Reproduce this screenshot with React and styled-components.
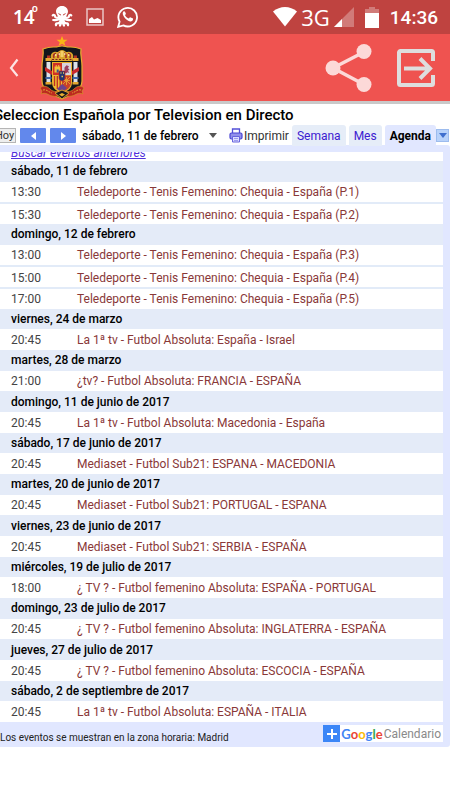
import { Fragment } from "react";
import styled, { createGlobalStyle } from "styled-components";

const days = [
  {
    date: "sábado, 11 de febrero",
    events: [
      ["13:30", "Teledeporte - Tenis Femenino: Chequia - España (P.1)"],
      ["15:30", "Teledeporte - Tenis Femenino: Chequia - España (P.2)"],
    ],
  },
  {
    date: "domingo, 12 de febrero",
    events: [
      ["13:00", "Teledeporte - Tenis Femenino: Chequia - España (P.3)"],
      ["15:00", "Teledeporte - Tenis Femenino: Chequia - España (P.4)"],
      ["17:00", "Teledeporte - Tenis Femenino: Chequia - España (P.5)"],
    ],
  },
  {
    date: "viernes, 24 de marzo",
    events: [["20:45", "La 1ª tv - Futbol Absoluta: España - Israel"]],
  },
  {
    date: "martes, 28 de marzo",
    events: [["21:00", "¿tv? - Futbol Absoluta: FRANCIA - ESPAÑA"]],
  },
  {
    date: "domingo, 11 de junio de 2017",
    events: [["20:45", "La 1ª tv - Futbol Absoluta: Macedonia - España"]],
  },
  {
    date: "sábado, 17 de junio de 2017",
    events: [["20:45", "Mediaset - Futbol Sub21: ESPANA - MACEDONIA"]],
  },
  {
    date: "martes, 20 de junio de 2017",
    events: [["20:45", "Mediaset - Futbol Sub21: PORTUGAL - ESPANA"]],
  },
  {
    date: "viernes, 23 de junio de 2017",
    events: [["20:45", "Mediaset - Futbol Sub21: SERBIA - ESPAÑA"]],
  },
  {
    date: "miércoles, 19 de julio de 2017",
    events: [["18:00", "¿ TV ? - Futbol femenino Absoluta: ESPAÑA - PORTUGAL"]],
  },
  {
    date: "domingo, 23 de julio de 2017",
    events: [["20:45", "¿ TV ? - Futbol femenino Absoluta: INGLATERRA - ESPAÑA"]],
  },
  {
    date: "jueves, 27 de julio de 2017",
    events: [["20:45", "¿ TV ? - Futbol femenino Absoluta: ESCOCIA - ESPAÑA"]],
  },
  {
    date: "sábado, 2 de septiembre de 2017",
    events: [["20:45", "La 1ª tv - Futbol Absoluta: ESPAÑA - ITALIA"]],
  },
];

function OctopusIcon() {
  return (
    <svg width="22" height="22" viewBox="0 0 22 22" fill="none" stroke="#fff" strokeWidth="2.200" strokeLinecap="round">
      <path d="M11 0C7.200 0 5 2.500 5 5.500c0 2 1.300 3.200 1.800 5L9 14h4l2.200-3.500c.5-1.800 1.800-3 1.800-5C17 2.500 14.800 0 11 0z" fill="#fff" stroke="none" />
      <path d="M8.500 10.500C7 12.500 4 12 4 10.200c0-1.200-1.500-1.700-2.300-.8M13.500 10.500c1.500 2 4.500 1.500 4.500-.3 0-1.200 1.500-1.700 2.300-.8" />
      <path d="M8.500 12.500c-1 2-4 1.500-6.300 1.500M13.500 12.500c1 2 4 1.500 6.300 1.500M9.500 13.500c0 3-1.500 4-3.500 3.800-1 0-1.300 1-1 2M12.500 13.500c0 3 1.500 4 3.500 3.800 1 0 1.300 1 1 2M10.500 14c0 3-.7 4-1.500 5.500M11.500 14c0 3 .7 4 1.500 5.500" />
      <path d="M7.800 7.800l1.900 1.100M14.200 7.800l-1.900 1.100" stroke="#bf4340" strokeWidth="1" />
    </svg>
  );
}

function PictureIcon() {
  return (
    <svg width="18" height="18" viewBox="0 0 18 18">
      <rect x="1" y="1" width="16" height="16" fill="none" stroke="#eac5c4" strokeWidth="1.500" />
      <path d="M3 15v-4l3-2 2 2.500 3.500-1.500 3.500 2v3z" fill="#fff" />
    </svg>
  );
}

function WhatsappIcon() {
  return (
    <svg width="22" height="22" viewBox="0 0 22 22">
      <path d="M1.200 20.800l1.400-5.100A9.300 9.300 0 1 1 6.400 19.400z" fill="none" stroke="#fff" strokeWidth="1.800" />
      <path d="M8 5.800c-.4-.7-1-.7-1.500-.2-1.300 1.300-.9 3.300.6 5.400 1.800 2.600 4.100 4.200 6.200 4.400 1.500.1 2.800-.9 2.800-2.400 0-.4-.2-.6-.5-.7l-2-.9c-.4-.2-.7-.1-.9.200l-.8 1c-1.700-.5-3.200-1.900-3.900-3.400l.8-1.100c.1-.2.1-.4 0-.7z" fill="#fff" />
    </svg>
  );
}

function WifiIcon() {
  return (
    <svg width="24" height="20" viewBox="0 0 24 20">
      <path d="M0 4.500C7-1.500 17-1.500 24 4.500L12 19.500z" fill="#fff" />
    </svg>
  );
}

function SignalIcon() {
  return (
    <svg width="20" height="20" viewBox="0 0 20 20">
      <path d="M0 20L20 0v20z" fill="#d17b79" />
      <path d="M0 20l8-8v8z" fill="#fff" />
    </svg>
  );
}

function BatteryIcon() {
  return (
    <svg width="14" height="21" viewBox="0 0 14 21">
      <path d="M4 0h6v2h4v5H0V2h4z" fill="#d17b79" />
      <path d="M0 6h14v15H0z" fill="#fff" />
    </svg>
  );
}

function BackIcon() {
  return (
    <svg width="10" height="20" viewBox="0 0 10 20">
      <path d="M8.500 1.500L2 10l6.500 8" fill="none" stroke="#fde4e4" strokeWidth="2.200" />
    </svg>
  );
}

function Crest() {
  return (
    <svg width="44" height="64" viewBox="0 0 44 64">
      <path d="M22 0l1.500 3.700 4 .1-3.200 2.400 1.200 3.800-3.500-2.300L18.500 10l1.200-3.800-3.200-2.400 4-.1z" fill="#f9b516" />
      <path d="M22 10c3 0 4 1 7 1s6-.4 12 2c-1 6 1 10 1 17v15c0 9-10 14-20 18C12 59 2 54 2 45V30c0-7 2-11 1-17 6-2.400 9-2 12-2s4-1 7-1z" fill="#12151c" stroke="#e6ae31" strokeWidth="1.200" />
      <path d="M12 25c-2-3-2-8 2-9 2-.8 3 .2 4 0 1-1 2-2 4-2s3 1 4 2c1 .2 2-.8 4 0 4 1 4 6 2 9z" fill="#d9a52c" />
      <path d="M14 22c-1-3 0-4.500 2-4.500M18 22c-.4-3 .6-5 2-5M30 22c1-3 0-4.500-2-4.500M26 22c.4-3-.6-5-2-5" stroke="#a32d24" strokeWidth="1.600" fill="none" />
      <path d="M20.500 15h3v6h-3z" fill="#f4cf69" />
      <path d="M15 19h1.500M18.500 18H20M24 18h1.500M28 19h1.500" stroke="#fff1b5" strokeWidth="1.300" />
      <path d="M12 23.500h20" stroke="#7a1f20" strokeWidth="1" strokeDasharray="2 1.500" />
      <path d="M12 26h20v20c0 7-5 9-10 11-5-2-10-4-10-11z" fill="#e9b32e" />
      <path d="M13 27h9v12h-9z" fill="#cf3026" />
      <path d="M14.500 36.500v-6h1.200v-1.500h1v1.500h1.500v-1.500h1v1.500h1.200v6z" fill="#f2c33c" />
      <path d="M16.700 33.500h2v3h-2z" fill="#385193" />
      <path d="M22 27h9v12h-9z" fill="#d7d4dc" />
      <path d="M24.500 37c1-2-.5-3 0-5.500l2-2.300 2.500 1-1.200 2 1.700 1-1.500 1.500 1.300 2.300-2-.7-1 1z" fill="#9b405f" />
      <path d="M13 39.500h9V56c-6-2-9-5-9-10z" fill="#edbd33" />
      <path d="M14.500 40v10M17.300 40v13M20.200 40v15" stroke="#bf2d24" strokeWidth="1.300" />
      <path d="M22 39.500h9V46c0 6-4 8-9 10z" fill="#c94028" />
      <path d="M23 41l7 7M30 41l-7 7M23 44.500h7M26.500 41v8" stroke="#e3a034" strokeWidth=".9" />
      <path d="M17 53l5-5 5 4-5 4.500z" fill="#6b438d" />
      <path d="M19 35h6v7c0 2-2 3-3 3s-3-1-3-3z" fill="#233471" stroke="#be2926" strokeWidth=".7" />
      <path d="M20.500 37h1M23 37h1M21.500 40.500h1.500" stroke="#e7c857" strokeWidth="1.300" />
      <path d="M6.500 26h4v22h-4zM33.500 26h4v22h-4z" fill="#dce2e9" />
      <path d="M5.500 22h6v3h-6zM32.500 22h6v3h-6zM5.500 46h6v2.500h-6zM32.500 46h6v2.500h-6z" fill="#e3a72f" />
      <path d="M7 19.500h3V22H7zM34 19.500h3V22h-3z" fill="#b23224" />
      <path d="M5 31l7 4v4l-7-4zM39 31l-7 4v4l7-4z" fill="#c8292d" />
      <path d="M5.500 42h6M32.500 42h6" stroke="#4068aa" strokeWidth="2" />
      <path d="M0 52c3-3 7-2 10 1 4 4 8 2 12 2s8 2 12-2c3-3 7-4 10-1l-2 3 1 3c-5-2-7 1-11 2-4 1.500-7-1-10-1s-6 2.500-10 1c-4-1-6-4-11-2l1-3z" fill="#bc2a20" stroke="#d59228" strokeWidth=".7" />
      <path d="M3 54c4-1 5 2 9 3M41 54c-4-1-5 2-9 3" fill="none" stroke="#e4a634" strokeWidth="1" strokeDasharray="2 1" />
      <path d="M15 57l7-3 7 3-7 6z" fill="#171920" stroke="#d99e2c" />
      <path d="M19 58.500l3-1.500 3 1.500-3 2z" fill="#e7ae32" />
    </svg>
  );
}

function ShareIcon() {
  return (
    <svg width="47" height="50" viewBox="0 0 47 50">
      <path d="M39 9L8 25l31 16.500" fill="none" stroke="#fcd9d8" strokeWidth="3.500" />
      <circle cx="39" cy="8.500" r="7.500" fill="#fcd9d8" />
      <circle cx="8" cy="25" r="7.500" fill="#fcd9d8" />
      <circle cx="39" cy="41.500" r="7.500" fill="#fcd9d8" />
    </svg>
  );
}

function ExitIcon() {
  return (
    <svg width="40" height="40" viewBox="0 0 40 40" fill="none" stroke="#dedede" strokeWidth="4">
      <path d="M37 13V4.500a1.500 1.500 0 0 0-1.500-1.500h-31A1.500 1.500 0 0 0 3 4.500v31A1.500 1.500 0 0 0 4.500 37h31a1.500 1.500 0 0 0 1.500-1.500V27" />
      <path d="M8 20.500h26M24 10.500l10 10-10 10" />
    </svg>
  );
}

function PrinterIcon() {
  return (
    <svg width="14" height="15" viewBox="0 0 14 15">
      <path d="M3.500 5V1h7v4" fill="#fff" stroke="#5350d8" strokeWidth="1.300" />
      <rect x="1" y="5" width="12" height="6" rx="1.500" fill="#9190ea" stroke="#4a45d4" strokeWidth="1.200" />
      <path d="M3.500 8.500h7V14h-7z" fill="#dcdcff" stroke="#6764dd" />
      <path d="M5 10.500h4M5 12.500h4" stroke="#8d8bea" strokeWidth=".8" />
    </svg>
  );
}

function Arrow({ d, color, width, height }) {
  return (
    <svg width={width} height={height} viewBox={`0 0 ${width} ${height}`}>
      <path d={d} fill={color} />
    </svg>
  );
}

function App() {
  return (
    <>
      <GlobalStyle />
      <StatusBar>
        <StatusGroup $gap="13px">
          <Temperature>
            14<Degree>o</Degree>
          </Temperature>
          <OctopusIcon />
          <PictureIcon />
          <WhatsappIcon />
        </StatusGroup>
        <StatusGroup $gap="4px">
          <WifiIcon />
          <Network>3G</Network>
          <SignalIcon />
          <Battery>
            <BatteryIcon />
          </Battery>
          <Clock>14:36</Clock>
        </StatusGroup>
      </StatusBar>
      <AppBar>
        <BarButton aria-label="Atrás">
          <BackIcon />
        </BarButton>
        <Crest />
        <BarActions>
          <BarButton aria-label="Compartir">
            <ShareIcon />
          </BarButton>
          <BarButton aria-label="Salir">
            <ExitIcon />
          </BarButton>
        </BarActions>
      </AppBar>
      <Calendar>
        <Title>Seleccion Española por Television en Directo</Title>
        <Toolbar>
          <Today>Hoy</Today>
          <NavButton aria-label="Anterior">
            <Arrow d="M5 0v8L0 4z" color="#fff" width={5} height={8} />
          </NavButton>
          <NavButton aria-label="Siguiente">
            <Arrow d="M0 0v8l5-4z" color="#fff" width={5} height={8} />
          </NavButton>
          <DateButton>
            sábado, 11 de febrero
            <Arrow d="M0 0h8L4 5z" color="#555" width={8} height={5} />
          </DateButton>
          <Views>
            <Print href="#imprimir">
              <PrinterIcon />
              Imprimir
            </Print>
            <Tab>Semana</Tab>
            <Tab>Mes</Tab>
            <Tab $active>Agenda</Tab>
            <MenuButton aria-label="Más vistas">
              <Arrow d="M0 0h8L4 5z" color="#3f6fce" width={8} height={5} />
            </MenuButton>
          </Views>
        </Toolbar>
        <Panel>
          <Earlier>
            <a href="#anteriores">Buscar eventos anteriores</a>
          </Earlier>
          <Agenda>
            <tbody>
              {days.map((day) => (
                <Fragment key={day.date}>
                  <tr>
                    <Day colSpan={2} scope="colgroup">
                      {day.date}
                    </Day>
                  </tr>
                  {day.events.map(([time, name], i) => (
                    <EventRow key={time} $divided={i > 0}>
                      <Time>{time}</Time>
                      <Name>{name}</Name>
                    </EventRow>
                  ))}
                </Fragment>
              ))}
            </tbody>
          </Agenda>
          <Footer>
            <Zone>Los eventos se muestran en la zona horaria: Madrid</Zone>
            <GoogleLink href="#calendario">
              <Plus>
                <Arrow d="M4 0h2v4h4v2H6v4H4V6H0V4h4z" color="#fff" width={10} height={10} />
              </Plus>
              <Google>
                <Letter $color="#4285f4">G</Letter>
                <Letter $color="#ea4335">o</Letter>
                <Letter $color="#fbbc05">o</Letter>
                <Letter $color="#4285f4">g</Letter>
                <Letter $color="#34a853">l</Letter>
                <Letter $color="#ea4335">e</Letter>
              </Google>
              Calendario
            </GoogleLink>
          </Footer>
        </Panel>
      </Calendar>
    </>
  );
}

const GlobalStyle = createGlobalStyle`
  * {
    box-sizing: border-box;
  }
  body {
    margin: 0;
    background: #ffffff;
    font-family: Roboto, sans-serif;
    font-size: 12px;
    color: #000000;
  }
  button {
    padding: 0;
    border: none;
    background: none;
    font-family: inherit;
    color: inherit;
    cursor: pointer;
  }
  svg {
    display: block;
    flex-shrink: 0;
  }
`;

const StatusBar = styled.div`
  display: flex;
  justify-content: space-between;
  height: 34px;
  padding: 0 12px 0 13px;
  background: #bf4340;
  color: #ffffff;
`;

const StatusGroup = styled.div`
  display: flex;
  align-items: center;
  gap: ${(props) => props.$gap};
`;

const Temperature = styled.span`
  display: flex;
  font-family: "Noto Sans", sans-serif;
  font-size: 19px;
  font-weight: 600;
  line-height: 34px;
`;

const Degree = styled.sup`
  margin-left: -3px;
  font-size: 10px;
  line-height: 16px;
`;

const Network = styled.span`
  font-family: "Open Sans", sans-serif;
  font-size: 22px;
  line-height: 32px;
`;

const Battery = styled.span`
  padding: 0 7px;
`;

const Clock = styled.time`
  font-size: 19px;
  font-weight: 500;
`;

const AppBar = styled.header`
  display: flex;
  align-items: center;
  gap: 21px;
  height: 70px;
  padding: 0 14px 0 9px;
  background: #ef5350;
  border-bottom: 3px solid #c9c9c9;
`;

const BarActions = styled.div`
  display: flex;
  align-items: center;
  gap: 24px;
  margin-left: auto;
`;

const BarButton = styled.button`
  display: flex;
`;

const Calendar = styled.main`
  overflow: hidden;
`;

const Title = styled.h1`
  margin: 0 0 0 -6px;
  font-size: 15px;
  font-weight: 500;
  line-height: 22px;
  white-space: nowrap;
`;

const Toolbar = styled.div`
  display: flex;
  align-items: center;
  gap: 4px;
  height: 19px;
  margin-left: -9px;
`;

const Today = styled.button`
  width: 25px;
  height: 15px;
  padding-left: 2px;
  background: #eeeeee;
  border: 1px solid #b5b5b5;
  font-size: 11px;
  line-height: 13px;
  color: #333333;
`;

const NavButton = styled.button`
  display: flex;
  align-items: center;
  justify-content: center;
  width: 26px;
  height: 15px;
  background: #6288ec;
  border-radius: 1px;
`;

const DateButton = styled.button`
  display: flex;
  align-items: center;
  gap: 10px;
  margin-left: 2px;
  font-size: 12px;
  font-weight: 500;
  white-space: nowrap;
`;

const Views = styled.div`
  display: flex;
  align-items: flex-end;
  gap: 3px;
  height: 21px;
  margin-left: auto;
  padding-right: 1px;
`;

const Print = styled.a`
  display: flex;
  align-items: center;
  gap: 1px;
  height: 21px;
  font-size: 12px;
  color: #333333;
  text-decoration: none;
`;

const Tab = styled.button`
  height: 21px;
  padding: 0 5px;
  border-radius: 3px 3px 0 0;
  background: ${(props) => (props.$active ? "#e1e7ff" : "#e6edf8")};
  font-size: 12px;
  font-weight: ${(props) => (props.$active ? 700 : 400)};
  color: ${(props) => (props.$active ? "#000000" : "#3c20d0")};
`;

const MenuButton = styled.button`
  display: flex;
  align-items: center;
  justify-content: center;
  align-self: center;
  width: 13px;
  height: 13px;
  margin-left: -3px;
  background: #b8d2fa;
  border: 1px solid #9dbcee;
`;

const Panel = styled.section`
  padding: 7px 7px 0 0;
  background: #e1e7ff;
  border-radius: 0 3px 3px 0;
`;

const Earlier = styled.div`
  display: flex;
  align-items: flex-end;
  height: 9px;
  padding-left: 11px;
  overflow: hidden;
  background: #ffffff;

  a {
    font-style: italic;
    line-height: 16px;
    color: #5030dc;
  }
`;

const Agenda = styled.table`
  width: 100%;
  height: 561px;
  border-collapse: separate;
  border-spacing: 0;
  background: #ffffff;
`;

const Day = styled.th`
  height: 20px;
  padding: 0 0 0 11px;
  background: #e4ebf8;
  font-weight: 500;
  line-height: 20px;
  text-align: left;
`;

const EventRow = styled.tr`
  td {
    height: 20px;
    padding: 1px 0 0;
    border-top: ${(props) => (props.$divided ? "2px solid #e2ebf8" : "none")};
    line-height: 18px;
  }
`;

const Time = styled.td`
  width: 77px;
  color: #444444;

  && {
    padding-left: 11px;
  }
`;

const Name = styled.td`
  color: #893838;
`;

const Footer = styled.footer`
  display: flex;
  align-items: flex-start;
  justify-content: space-between;
  height: 25px;
  padding-top: 3px;
`;

const Zone = styled.span`
  padding-top: 7px;
  font-size: 10px;
  color: #222222;
`;

const GoogleLink = styled.a`
  display: flex;
  align-items: center;
  height: 17px;
  padding-right: 2px;
  background: #ffffff;
  font-size: 12px;
  color: #8a8a8a;
  text-decoration: none;
`;

const Plus = styled.span`
  display: flex;
  align-items: center;
  justify-content: center;
  width: 17px;
  height: 17px;
  margin-right: 1px;
  background: #3b86f7;
`;

const Google = styled.span`
  margin-right: 1px;
  font-family: Lato, sans-serif;
  font-size: 13px;
  font-weight: 700;
`;

const Letter = styled.span`
  color: ${(props) => props.$color};
`;

export default App;
